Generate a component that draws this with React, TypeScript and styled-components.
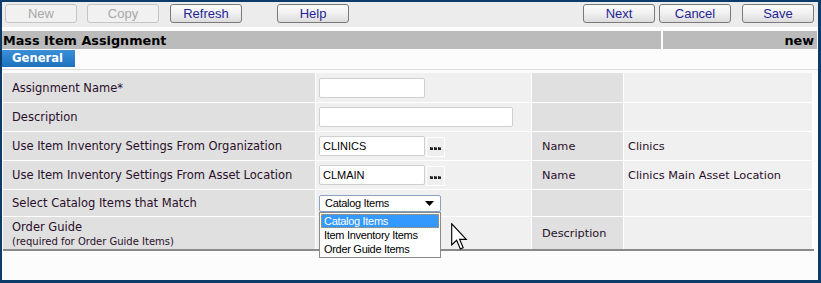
import React from "react";
import styled, { createGlobalStyle } from "styled-components";

const GlobalStyle = createGlobalStyle`
  html, body {
    margin: 0;
    padding: 0;
    background: #ffffff;
  }
  * {
    box-sizing: border-box;
  }
`;

const Frame = styled.div`
  position: relative;
  width: 821px;
  height: 283px;
  border-style: solid;
  border-color: #0c3c6a;
  border-width: 2px 3px 3px 2px;
  background: #fcfcfc;
  font-family: "DejaVu Sans", Verdana, sans-serif;
  overflow: hidden;
`;

const Toolbar = styled.div`
  display: flex;
  align-items: flex-start;
  height: 25px;
  padding: 2px 4px 0 3px;
  background: #ececec;
`;

const Spacer = styled.div`
  flex: 1;
`;

const ToolButton = styled.button<{ $gap?: number }>`
  width: 72px;
  height: 19px;
  margin: 0 0 0 ${(p) => p.$gap ?? 0}px;
  padding: 0;
  border: 1px solid ${(p) => (p.disabled ? "#c4c4c4" : "#7a7a7a")};
  border-radius: 3px;
  background: ${(p) =>
    p.disabled
      ? "#f1f1f1"
      : "linear-gradient(to bottom, #fdfdfd 0%, #f0f0f0 50%, #dcdcdc 100%)"};
  color: ${(p) => (p.disabled ? "#a8a8a8" : "#1f1f96")};
  font-family: "Liberation Sans", Arial, sans-serif;
  font-size: 13px;
  line-height: 17px;
  text-align: center;
`;

const TitleBar = styled.div`
  display: grid;
  grid-template-columns: 1fr 154px;
  column-gap: 2px;
  height: 18px;
  margin-top: 4px;
  padding-right: 1px;
`;

const TitleCell = styled.div<{ $right?: boolean }>`
  display: flex;
  align-items: center;
  justify-content: ${(p) => (p.$right ? "flex-end" : "flex-start")};
  padding: ${(p) => (p.$right ? "0 3px" : "0 0 0 1px")};
  background: #bbbbbb;
  color: #000;
  font-size: 12.8px;
  font-weight: bold;
`;

const TabRow = styled.div`
  height: 21px;
  padding-top: 1px;
  border-bottom: 1px solid #dcdcdc;
`;

const Tab = styled.div`
  width: 73px;
  height: 17px;
  padding-left: 10px;
  background: linear-gradient(to bottom, #3b8fd8 0%, #1d72bf 100%);
  color: #fff;
  font-size: 11.6px;
  font-weight: bold;
  line-height: 17px;
`;

const FormGrid = styled.div`
  display: grid;
  grid-template-columns: 312px 215px 91px 188px;
  grid-template-rows: 29px 28px 28px 28px 26px 32px;
  gap: 1px;
  width: 811px;
  margin: 3px 0 0 1px;
  border-bottom: 2px solid #8a8a8a;
  background: #ffffff;
`;

const Cell = styled.div<{ $shade: "label" | "value" }>`
  position: relative;
  display: flex;
  flex-direction: column;
  justify-content: center;
  background: ${(p) => (p.$shade === "label" ? "#e0e0e0" : "#f0f0f0")};
  color: #2a0f2a;
  font-size: 11.5px;
`;

const LabelCell = styled(Cell)`
  padding-left: 9px;
`;

const SideLabel = styled(Cell)`
  padding-left: 10px;
  font-size: 11.3px;
`;

const SideValue = styled(Cell)`
  padding-left: 4px;
  font-size: 11.3px;
`;

const ValueCell = styled(Cell)`
  flex-direction: row;
  align-items: center;
  justify-content: flex-start;
  padding-left: 3px;
`;

const Hint = styled.span`
  margin-top: 2px;
  font-size: 10px;
`;

const TextInput = styled.div<{ $width: number }>`
  width: ${(p) => p.$width}px;
  height: 20px;
  padding: 0 3px;
  border: 1px solid #cfcfcf;
  border-radius: 2px;
  background: #fff;
  color: #000;
  font-family: "Liberation Sans", Arial, sans-serif;
  font-size: 11px;
  line-height: 18px;
`;

const LookupButton = styled.div`
  display: flex;
  align-items: flex-end;
  justify-content: center;
  width: 19px;
  height: 20px;
  margin: 2px 0 0 1px;
  padding-bottom: 5px;
  border: 1px solid #ffffff;
  background: #efefef;
`;

const SelectBox = styled.div`
  display: flex;
  align-items: center;
  justify-content: space-between;
  width: 122px;
  height: 17px;
  padding: 0 6px 0 5px;
  border: 1px solid #8aa0bd;
  border-radius: 2px;
  background: #fff;
  color: #000;
  font-family: "Liberation Sans", Arial, sans-serif;
  font-size: 11px;
  letter-spacing: -0.3px;
`;

const OptionList = styled.div`
  position: absolute;
  left: 3px;
  top: 22px;
  z-index: 5;
  width: 122px;
  padding: 1px;
  border: 1px solid #8a8a8a;
  background: #fff;
`;

const Option = styled.div<{ $active?: boolean }>`
  height: 14px;
  padding-left: 2px;
  border: 1px dotted ${(p) => (p.$active ? "#e08a3c" : "transparent")};
  background: ${(p) => (p.$active ? "#3399ff" : "#fff")};
  color: ${(p) => (p.$active ? "#fff" : "#000")};
  font-family: "Liberation Sans", Arial, sans-serif;
  font-size: 11px;
  letter-spacing: -0.3px;
  line-height: 12px;
`;

const Pointer = styled.svg`
  position: absolute;
  left: 449px;
  top: 221px;
  z-index: 6;
`;

const Dots = () => (
  <svg width="11" height="4" viewBox="0 0 11 4">
    {[0, 4, 8].map((x) => (
      <g key={x}>
        <rect x={x} y="0" width="3" height="3" fill="#222" />
        <rect x={x + 1} y="0" width="2" height="1" fill="#777" />
      </g>
    ))}
  </svg>
);

const Caret = () => (
  <svg width="9" height="5" viewBox="0 0 9 5">
    <path d="M0 0 H9 L4.5 5 Z" fill="#000" />
  </svg>
);

const rows = [
  { label: "Assignment Name*", input: { width: 106, value: "" } },
  { label: "Description", input: { width: 194, value: "" } },
  {
    label: "Use Item Inventory Settings From Organization",
    input: { width: 106, value: "CLINICS" },
    lookup: true,
    side: ["Name", "Clinics"],
  },
  {
    label: "Use Item Inventory Settings From Asset Location",
    input: { width: 106, value: "CLMAIN" },
    lookup: true,
    side: ["Name", "Clinics Main Asset Location"],
  },
];

const choices = ["Catalog Items", "Item Inventory Items", "Order Guide Items"];

const App = () => {
  return (
    <Frame>
      <GlobalStyle />
      <Toolbar>
        <ToolButton disabled>New</ToolButton>
        <ToolButton disabled $gap={10}>
          Copy
        </ToolButton>
        <ToolButton $gap={11}>Refresh</ToolButton>
        <ToolButton $gap={35}>Help</ToolButton>
        <Spacer />
        <ToolButton>Next</ToolButton>
        <ToolButton $gap={4}>Cancel</ToolButton>
        <ToolButton $gap={11}>Save</ToolButton>
      </Toolbar>

      <TitleBar>
        <TitleCell>Mass Item Assignment</TitleCell>
        <TitleCell $right>new</TitleCell>
      </TitleBar>

      <TabRow>
        <Tab>General</Tab>
      </TabRow>

      <FormGrid>
        {rows.map((row) => (
          <React.Fragment key={row.label}>
            <LabelCell $shade="label">{row.label}</LabelCell>
            <ValueCell $shade="value">
              <TextInput $width={row.input.width}>{row.input.value}</TextInput>
              {row.lookup && (
                <LookupButton>
                  <Dots />
                </LookupButton>
              )}
            </ValueCell>
            <SideLabel $shade="label">{row.side?.[0]}</SideLabel>
            <SideValue $shade="value">{row.side?.[1]}</SideValue>
          </React.Fragment>
        ))}

        <LabelCell $shade="label">Select Catalog Items that Match</LabelCell>
        <ValueCell $shade="value">
          <SelectBox>
            <span>Catalog Items</span>
            <Caret />
          </SelectBox>
          <OptionList>
            {choices.map((c, i) => (
              <Option key={c} $active={i === 0}>
                {c}
              </Option>
            ))}
          </OptionList>
        </ValueCell>
        <SideLabel $shade="label" />
        <SideValue $shade="value" />

        <LabelCell $shade="label">
          <span>Order Guide</span>
          <Hint>(required for Order Guide Items)</Hint>
        </LabelCell>
        <ValueCell $shade="value" />
        <SideLabel $shade="label">Description</SideLabel>
        <SideValue $shade="value" />
      </FormGrid>

      <Pointer width="17" height="27" viewBox="0 0 12 19">
        <path
          d="M0.5 0.5 L0.5 15.5 L4 12.2 L6.6 18.3 L8.6 17.4 L6.1 11.5 L10.8 11.5 Z"
          fill="#fff"
          stroke="#000"
          strokeWidth="0.8"
          strokeLinejoin="miter"
        />
      </Pointer>
    </Frame>
  );
};

export default App;
